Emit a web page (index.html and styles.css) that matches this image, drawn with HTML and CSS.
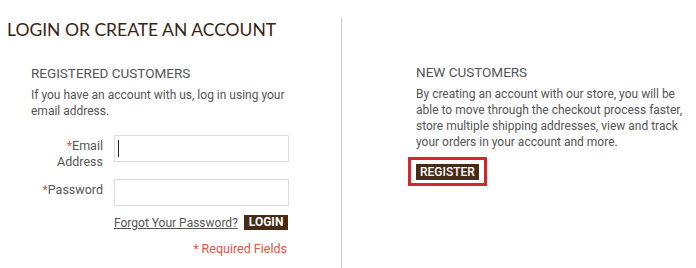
FILE: index.html
```html
<!DOCTYPE html>
<html lang="en">
<head>
  <meta charset="UTF-8">
  <title>Login or Create an Account</title>
  <link rel="stylesheet" href="styles.css">
</head>
<body>
  <div class="account">
    <div class="col col-left">
      <h1>LOGIN OR CREATE AN ACCOUNT</h1>
      <div class="section">
        <h2>REGISTERED CUSTOMERS</h2>
        <p class="intro">If you have an account with us, log in using your email address.</p>

        <form class="login-form">
          <div class="row">
            <label for="email"><em>*</em>Email<br>Address</label>
            <span class="field">
              <input type="text" id="email">
              <span class="caret"></span>
            </span>
          </div>
          <div class="row">
            <label for="pass"><em>*</em>Password</label>
            <span class="field">
              <input type="password" id="pass">
            </span>
          </div>
          <div class="actions">
            <a href="#" class="forgot">Forgot Your Password?</a>
            <button type="button" class="btn">LOGIN</button>
          </div>
          <p class="required">* Required Fields</p>
        </form>
      </div>
    </div>

    <div class="col col-right">
      <div class="section">
        <h2>NEW CUSTOMERS</h2>
        <p class="intro">By creating an account with our store, you will be able to move through the checkout process faster, store multiple shipping addresses, view and track your orders in your account and more.</p>
        <div class="highlight">
          <button type="button" class="btn">REGISTER</button>
        </div>
      </div>
    </div>
  </div>
</body>
</html>
```

FILE: styles.css
```css
* {
  box-sizing: border-box;
}
body {
  margin: 0;
  background: #ffffff;
  font-family: Roboto, Arial, sans-serif;
  font-size: 12px;
  color: #555555;
}
.account {
  display: flex;
  padding-top: 18px;
  min-height: 268px;
}
.col-left {
  width: 342px;
  border-right: 1px solid #cccccc;
}
.col-right {
  flex: 1;
  padding-left: 74px;
  padding-top: 46px;
}
h1 {
  margin: 0;
  padding: 1px 0 0 7px;
  font-family: Lato, sans-serif;
  font-weight: 400;
  font-size: 17.5px;
  line-height: 22px;
  color: #3a2515;
}
.col-left .section {
  padding: 24px 0 0 31px;
}
h2 {
  margin: 0;
  font-weight: 400;
  font-size: 13.5px;
  line-height: 16px;
  color: #555555;
}
.intro {
  margin: 6px 0 0;
  line-height: 16px;
  width: 270px;
}
.login-form {
  margin-top: 16px;
}
.row {
  display: flex;
  align-items: flex-start;
  gap: 11px;
  margin-bottom: 9px;
}
.row label {
  width: 72px;
  text-align: right;
  padding-top: 3px;
  line-height: 16px;
  font-size: 12.5px;
  color: #555555;
}
.row label em {
  font-style: normal;
  color: #e0563e;
}
.field {
  position: relative;
  display: block;
}
.field input {
  display: block;
  width: 175px;
  height: 27px;
  border: 1px solid #dddddd;
  margin: 0;
}
.caret {
  position: absolute;
  left: 4px;
  top: 5px;
  width: 1px;
  height: 17px;
  background: #222222;
}
.actions {
  display: flex;
  align-items: center;
  gap: 6px;
  margin-left: 83px;
  margin-top: 7px;
}
.forgot {
  color: #555555;
  font-size: 12px;
}
.btn {
  border: none;
  padding: 0 5px;
  height: 15px;
  background: #472b15;
  color: #ffffff;
  font-family: Roboto, sans-serif;
  font-weight: 700;
  font-size: 12px;
  line-height: 15px;
  cursor: pointer;
}
.required {
  margin: 11px 0 0;
  width: 256px;
  text-align: right;
  color: #e0563e;
  font-size: 12.5px;
}
.col-right .intro {
  width: 275px;
}
.highlight {
  display: inline-block;
  margin: 7px 0 0 -8px;
  border: 3px solid #d9232e;
  padding: 4px 5px 3px 5px;
}
.highlight .btn {
  display: block;
  height: 16px;
  padding: 0 4px;
  font-weight: 500;
}
```
